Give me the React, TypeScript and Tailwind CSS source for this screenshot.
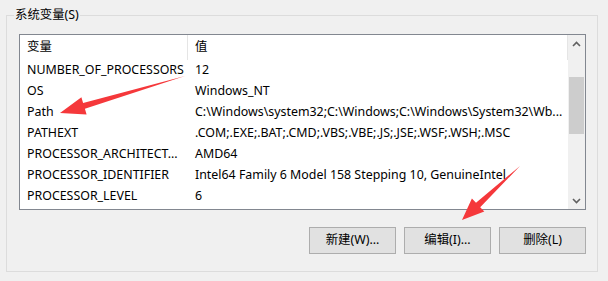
import React from "react";

const rows: [string, string][] = [
  ["NUMBER_OF_PROCESSORS", "12"],
  ["OS", "Windows_NT"],
  ["Path", "C:\\Windows\\system32;C:\\Windows;C:\\Windows\\System32\\Wb..."],
  ["PATHEXT", ".COM;.EXE;.BAT;.CMD;.VBS;.VBE;.JS;.JSE;.WSF;.WSH;.MSC"],
  ["PROCESSOR_ARCHITECT...", "AMD64"],
  ["PROCESSOR_IDENTIFIER", "Intel64 Family 6 Model 158 Stepping 10, GenuineIntel"],
  ["PROCESSOR_LEVEL", "6"],
];

function Btn({ label }: { label: string }) {
  return (
    <button className="w-[87px] h-[27px] bg-[#e1e1e1] border border-[#adadad] text-[12.4px] text-black flex items-center justify-center">
      {label}
    </button>
  );
}

export default function App() {
  return (
    <div
      className="relative w-[608px] h-[281px] bg-[#f0f0f0] pt-[15px] pl-[6px] overflow-hidden text-black"
      style={{ fontFamily: "'Noto Sans', 'Noto Sans CJK SC', sans-serif" }}
    >
      <div className="relative w-[592px] h-[257px] border border-[#dcdcdc] pl-[12px] pt-[18px]">
        <span className="absolute left-[7px] top-[-9px] px-[1px] bg-[#f0f0f0] text-[12.4px] leading-[16px]">
          系统变量(S)
        </span>

        <div className="flex w-[567px] h-[176px] border border-[#828790] bg-white">
          <div className="flex-1 flex flex-col">
            <div className="flex h-[25px] items-center text-[12.4px]">
              <div className="w-[168px] h-full pl-[7px] flex items-center border-r border-[#e5e5e5]">变量</div>
              <div className="flex-1 h-full pl-[7px] flex items-center border-r border-[#e5e5e5]">值</div>
            </div>
            {rows.map(([k, v]) => (
              <div key={k} className="flex h-[21px] items-center text-[12.4px] whitespace-nowrap">
                <div className="w-[168px] pl-[7px] overflow-hidden">{k}</div>
                <div className="flex-1 pl-[7px] overflow-hidden">{v}</div>
              </div>
            ))}
          </div>
          <div className="w-[17px] bg-[#f0f0f0] flex flex-col">
            <div className="h-[17px] flex items-center justify-center">
              <svg width="9" height="6" viewBox="0 0 9 6">
                <path d="M1 5 L4.5 1.5 L8 5" fill="none" stroke="#606060" strokeWidth="1.6" />
              </svg>
            </div>
            <div className="h-[25px]" />
            <div className="mx-[1px] h-[57px] bg-[#cdcdcd]" />
            <div className="flex-1" />
            <div className="h-[17px] flex items-center justify-center">
              <svg width="9" height="6" viewBox="0 0 9 6">
                <path d="M1 1 L4.5 4.5 L8 1" fill="none" stroke="#606060" strokeWidth="1.6" />
              </svg>
            </div>
          </div>
        </div>

        <div className="flex justify-end gap-[8px] w-[567px] mt-[17px]">
          <Btn label="新建(W)..." />
          <Btn label="编辑(I)..." />
          <Btn label="删除(L)" />
        </div>
      </div>

      <svg className="absolute left-0 top-0 pointer-events-none" width="608" height="281">
        <polygon
          points="60,113 81.4,97.3 83.1,103 185,76 84.9,108.8 86.6,114.5"
          fill="#f5383b"
        />
        <polygon
          points="462,220 471.9,198.4 476,202.8 520,166 480.2,207.2 484.3,211.6"
          fill="#f5383b"
        />
      </svg>
    </div>
  );
}
